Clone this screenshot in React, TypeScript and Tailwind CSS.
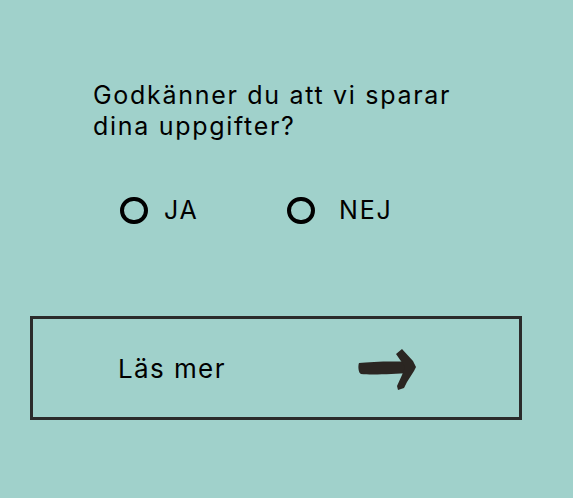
import React from "react";

const Radio: React.FC<{ label: string; className?: string }> = ({ label, className }) => (
  <label className={`flex items-center gap-[16px] ${className ?? ""}`}>
    <span className="block w-[28px] h-[27px] rounded-full border-[4px] border-black" />
    <span className="text-[25px] leading-none tracking-[1.8px] text-black">{label}</span>
  </label>
);

const Arrow: React.FC = () => (
  <svg width="60" height="42" viewBox="0 0 60 42" fill="#2b2622" className="mt-[4px]">
    {/* brush stroke shaft */}
    <path d="M1 14 C12 13 34 12 50 13 L51 24 C36 25 14 26 3 25 C0 24 0 16 1 14 Z" />
    {/* arrow head */}
    <path d="M38 5 L44 0 L55 12 L58 18 L56 22 L49 33 L46 39 L40 41 L39 37 L44 26 L47 18 Z" />
  </svg>
);

export default function App() {
  return (
    <div
      className="w-[573px] h-[498px] bg-[#a0d1cb] pt-[80px]"
      style={{ fontFamily: 'Inter, "Liberation Sans", sans-serif' }}
    >
      <h1 className="pl-[93px] text-[25px] leading-[31px] font-normal tracking-[1.7px] text-black">
        Godkänner du att vi sparar
        <br />
        dina uppgifter?
      </h1>

      <div className="flex pl-[120px] mt-[55px]">
        <Radio label="JA" className="w-[167px]" />
        <Radio label="NEJ" className="gap-[24px]" />
      </div>

      <div className="ml-[30px] mt-[92px] w-[492px] h-[104px] border-[3px] border-[#2b2b2b] flex items-center pl-[85px]">
        <span className="text-[26px] text-black w-[240px] tracking-[1.4px]">Läs mer</span>
        <Arrow />
      </div>
    </div>
  );
}
